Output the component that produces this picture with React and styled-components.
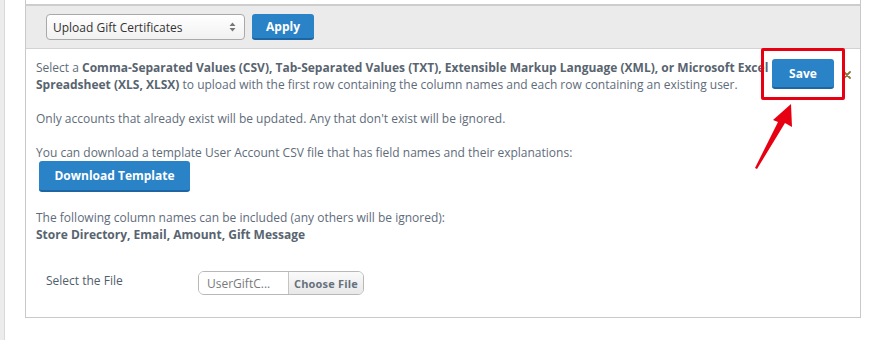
import React from 'react'
import styled, { createGlobalStyle } from 'styled-components'

const Global = createGlobalStyle`
  html, body { margin: 0; padding: 0; background: #fff; }
  body { font-family: "Open Sans", "Liberation Sans", sans-serif; font-size: 12px; color: #5e6c7a; }
`

export default function App() {
  return (
    <>
      <Global />
      <Page>
        <Sidebar />
        <Main>
          <Panel>
            <TopGap />
            <Toolbar>
              <Select>
                <span>Upload Gift Certificates</span>
                <SelectArrows>
                  <svg width="7" height="10" viewBox="0 0 7 10">
                    <path d="M3.5 0.5 L6.5 4 H0.5 Z M3.5 9.5 L6.5 6 H0.5 Z" fill="#777" />
                  </svg>
                </SelectArrows>
              </Select>
              <BlueButton $w={62} $h={26}>Apply</BlueButton>
            </Toolbar>
            <Body>
              <IntroRow>
                <IntroPara>
                  Select a <b>Comma-Separated Values (CSV), Tab-Separated Values (TXT), Extensible Markup Language (XML), or Microsoft Excel Spreadsheet (XLS, XLSX)</b> to upload with the first row containing the column names and each row containing an existing user.
                </IntroPara>
                <BlueButton $w={62} $h={30}>Save</BlueButton>
                <Close>
                  <svg width="8" height="8" viewBox="0 0 8 8">
                    <path d="M1 1 L7 7 M7 1 L1 7" stroke="#85773a" strokeWidth="1.8" strokeLinecap="round" />
                  </svg>
                </Close>
              </IntroRow>
              <Para>Only accounts that already exist will be updated. Any that don't exist will be ignored.</Para>
              <Para>You can download a template User Account CSV file that has field names and their explanations:</Para>
              <DownloadWrap>
                <BlueButton $w={151} $h={31}>Download Template</BlueButton>
              </DownloadWrap>
              <Para $gap={17}>
                The following column names can be included (any others will be ignored):
                <br />
                <b>Store Directory, Email, Amount, Gift Message</b>
              </Para>
              <FileRow>
                <FieldLabel>Select the File</FieldLabel>
                <FileInput>
                  <FileName>UserGiftC...</FileName>
                  <ChooseFile>Choose File</ChooseFile>
                </FileInput>
              </FileRow>
            </Body>
            <Highlight />
            <Arrow width="60" height="75" viewBox="0 0 60 75">
              <polygon points="4,68 27,22 22,20 40,4 41,27 34,23 6,69" fill="#e60012" />
            </Arrow>
          </Panel>
        </Main>
      </Page>
    </>
  )
}

const Page = styled.div`
  display: flex;
  height: 340px;
  overflow: hidden;
`

const Sidebar = styled.div`
  width: 4px;
  background: #ececec;
  border-right: 1px solid #d9d9d9;
  flex-shrink: 0;
`

const Main = styled.div`
  padding-left: 20px;
`

const Panel = styled.div`
  position: relative;
  width: 834px;
  border: 1px solid #c9c9c9;
  border-top: none;
`

const TopGap = styled.div`
  height: 4px;
  background: #fff;
`

const Toolbar = styled.div`
  display: flex;
  align-items: center;
  gap: 7px;
  height: 45px;
  box-sizing: border-box;
  padding: 0 0 0 20px;
  background: #ebebeb;
  border-top: 2px solid #cdcdcd;
  border-bottom: 1px solid #d2d2d2;
`

const Select = styled.div`
  display: flex;
  align-items: center;
  justify-content: space-between;
  width: 199px;
  height: 26px;
  box-sizing: border-box;
  padding: 0 8px 0 6px;
  border: 1px solid #a9a9a9;
  border-radius: 4px;
  background: linear-gradient(#ffffff, #f1f1f1);
  color: #333;
  font-size: 12px;
`

const SelectArrows = styled.span`
  display: flex;
`

const BlueButton = styled.div`
  display: flex;
  align-items: center;
  justify-content: center;
  flex-shrink: 0;
  width: ${p => p.$w}px;
  height: ${p => p.$h}px;
  box-sizing: border-box;
  background: #2a82c7;
  border-bottom: 2px solid #1d66a3;
  border-radius: 3px;
  color: #fff;
  font-weight: 700;
  font-size: 12px;
`

const Body = styled.div`
  padding: 10px 10px 22px 10px;
`

const IntroRow = styled.div`
  display: flex;
  align-items: flex-start;
`

const Para = styled.p`
  margin: ${p => (p.$gap ?? 0)}px 0 17px;
  line-height: 17px;
  b { font-weight: 700; color: #58646f; }
`

const IntroPara = styled(Para)`
  flex: 0 0 740px;
  margin-right: -4px;
`

const Close = styled.span`
  display: flex;
  margin: 12px 0 0 9px;
`

const DownloadWrap = styled.div`
  margin: -17px 0 0 3px;
`

const FileRow = styled.div`
  display: flex;
  align-items: center;
  margin-top: 28px;
  padding-left: 10px;
`

const FieldLabel = styled.div`
  width: 152px;
  margin-top: -6px;
  color: #4f5e6c;
`

const FileInput = styled.div`
  display: flex;
  width: 166px;
  height: 24px;
  box-sizing: border-box;
  border: 1px solid #b8b8b8;
  border-radius: 6px;
  overflow: hidden;
`

const FileName = styled.div`
  display: flex;
  align-items: center;
  width: 81px;
  padding-left: 8px;
  border-right: 1px solid #c4c4c4;
  color: #7a7a7a;
  background: #fff;
`

const ChooseFile = styled.div`
  flex: 1;
  display: flex;
  align-items: center;
  justify-content: center;
  background: linear-gradient(#fafafa, #e8e8e8);
  color: #66717c;
  font-weight: 700;
  font-size: 11px;
  letter-spacing: 0.2px;
`

const Highlight = styled.div`
  position: absolute;
  left: 735px;
  top: 48px;
  width: 84px;
  height: 52px;
  box-sizing: border-box;
  border: 3px solid #e60012;
  border-radius: 2px;
`

const Arrow = styled.svg`
  position: absolute;
  left: 725px;
  top: 100px;
`
